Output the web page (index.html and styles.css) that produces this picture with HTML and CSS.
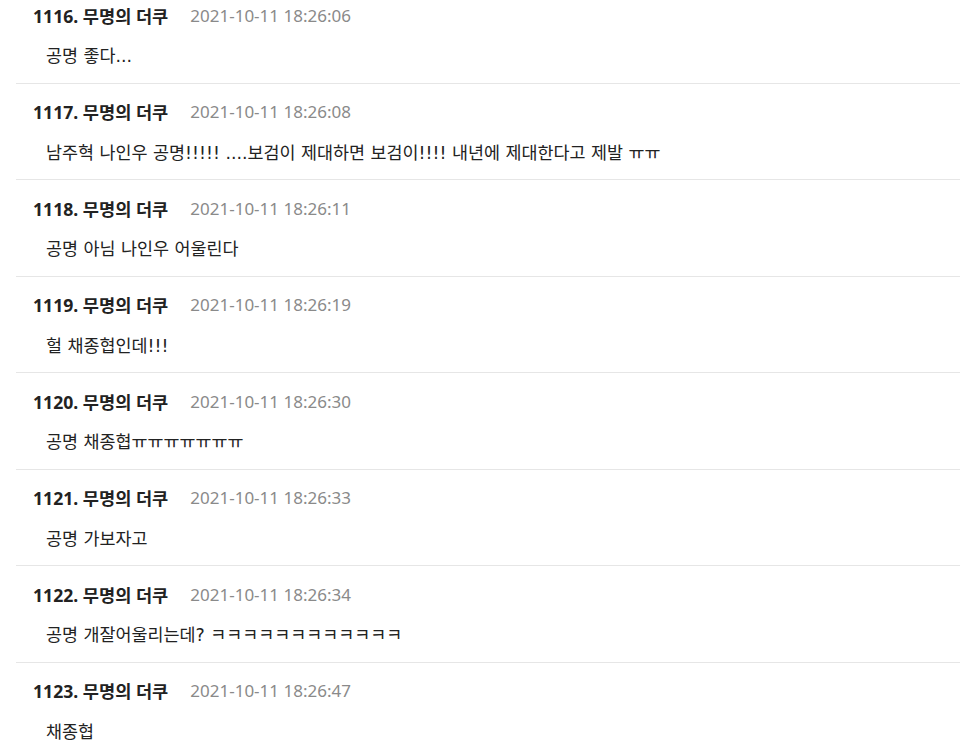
FILE: index.html
```html
<!DOCTYPE html>
<html lang="ko">
<head>
    <meta charset="UTF-8">
    <meta name="viewport" content="width=device-width, initial-scale=1.0">
    <title>댓글</title>
    <link rel="stylesheet" href="styles.css">
</head>
<body>
    <ul class="comments">
        <li class="comment">
            <div class="meta"><span class="name">1116. 무명의 더쿠</span><span class="date">2021-10-11 18:26:06</span></div>
            <p class="text">공명 좋다...</p>
        </li>
        <li class="comment">
            <div class="meta"><span class="name">1117. 무명의 더쿠</span><span class="date">2021-10-11 18:26:08</span></div>
            <p class="text">남주혁 나인우 공명!!!!! ....보검이 제대하면 보검이!!!! 내년에 제대한다고 제발 ㅠㅠ</p>
        </li>
        <li class="comment">
            <div class="meta"><span class="name">1118. 무명의 더쿠</span><span class="date">2021-10-11 18:26:11</span></div>
            <p class="text">공명 아님 나인우 어울린다</p>
        </li>
        <li class="comment">
            <div class="meta"><span class="name">1119. 무명의 더쿠</span><span class="date">2021-10-11 18:26:19</span></div>
            <p class="text">헐 채종협인데!!!</p>
        </li>
        <li class="comment">
            <div class="meta"><span class="name">1120. 무명의 더쿠</span><span class="date">2021-10-11 18:26:30</span></div>
            <p class="text">공명 채종협ㅠㅠㅠㅠㅠㅠㅠ</p>
        </li>
        <li class="comment">
            <div class="meta"><span class="name">1121. 무명의 더쿠</span><span class="date">2021-10-11 18:26:33</span></div>
            <p class="text">공명 가보자고</p>
        </li>
        <li class="comment">
            <div class="meta"><span class="name">1122. 무명의 더쿠</span><span class="date">2021-10-11 18:26:34</span></div>
            <p class="text">공명 개잘어울리는데? ㅋㅋㅋㅋㅋㅋㅋㅋㅋㅋㅋㅋ</p>
        </li>
        <li class="comment">
            <div class="meta"><span class="name">1123. 무명의 더쿠</span><span class="date">2021-10-11 18:26:47</span></div>
            <p class="text">채종협</p>
        </li>
    </ul>
</body>
</html>
```

FILE: styles.css
```css
body {
    margin: 0;
    background: #fff;
    font-family: "Noto Sans", "Noto Sans CJK KR", sans-serif;
    color: #222;
    overflow: hidden;
}
.comments {
    list-style: none;
    margin: -13px 0 0 16px;
    padding: 0;
}
.comment {
    padding: 17px 0 15.5px;
    border-bottom: 1px solid #e6e6e6;
}
.meta {
    display: flex;
    align-items: center;
    gap: 22px;
    height: 22px;
    padding-left: 17px;
}
.name {
    font-size: 17.6px;
    font-weight: bold;
    color: #222;
}
.date {
    font-size: 17px;
    color: #8a8a8a;
}
.text {
    margin: 19px 0 0;
    padding-left: 30px;
    font-family: "DejaVu Sans", "Noto Sans CJK KR", sans-serif;
    font-size: 17.4px;
    line-height: 22px;
}
```
